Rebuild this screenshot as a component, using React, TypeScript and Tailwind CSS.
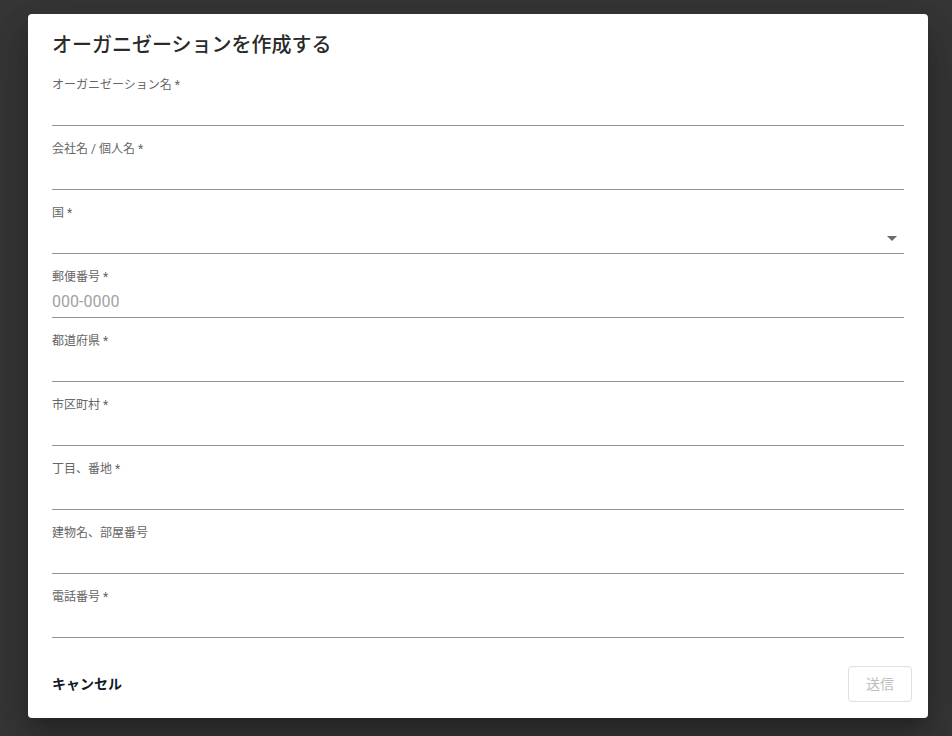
const fields: { label: string; placeholder?: string; select?: boolean }[] = [
  { label: 'オーガニゼーション名 *' },
  { label: '会社名 / 個人名 *' },
  { label: '国 *', select: true },
  { label: '郵便番号 *', placeholder: '000-0000' },
  { label: '都道府県 *' },
  { label: '市区町村 *' },
  { label: '丁目、番地 *' },
  { label: '建物名、部屋番号' },
  { label: '電話番号 *' },
];

const font = { fontFamily: 'Roboto, "Noto Sans CJK JP", sans-serif' };

export default function App() {
  return (
    <div className="min-h-[736px] w-[952px] bg-[#363636] pt-[14px] pl-[28px]" style={font}>
      <div className="w-[900px] h-[704px] bg-white rounded-[4px] shadow-[0_11px_15px_-7px_rgba(0,0,0,0.2),0_24px_38px_3px_rgba(0,0,0,0.14),0_9px_46px_8px_rgba(0,0,0,0.12)] flex flex-col">
        <h2 className="px-6 pt-[15px] pb-[15px] text-[20px] leading-[32px] font-medium text-[#2a2a2a]">
          オーガニゼーションを作成する
        </h2>
        <div className="px-6 flex flex-col">
          {fields.map((f) => (
            <div key={f.label} className="mb-[14px]">
              <div className="text-[12px] leading-[18px] text-[#666]">{f.label}</div>
              <div className="h-[32px] border-b border-[#949494] flex items-center justify-between">
                <span className="text-[16px] text-[#a2a2a2]">{f.placeholder ?? ''}</span>
                {f.select && (
                  <svg width="24" height="24" viewBox="0 0 24 24" className="fill-[#6b6b6b]">
                    <path d="M7 10l5 5 5-5z" />
                  </svg>
                )}
              </div>
            </div>
          ))}
        </div>
        <div className="mt-auto flex items-center justify-between pl-6 pr-4 pb-4">
          <button type="button" className="text-[14px] font-bold text-[#111827] leading-[36px]">
            キャンセル
          </button>
          <button
            type="button"
            className="w-[64px] h-[36px] border border-[#e0e0e0] rounded-[4px] text-[14px] text-[#bdbdbd]"
          >
            送信
          </button>
        </div>
      </div>
    </div>
  );
}
